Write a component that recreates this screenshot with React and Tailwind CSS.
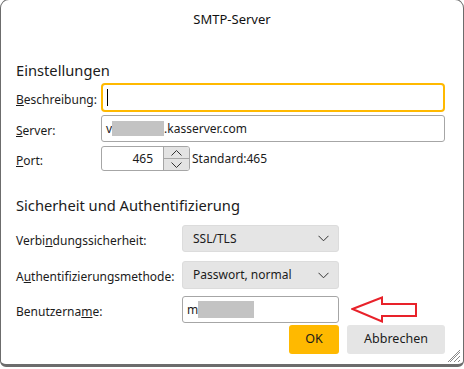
import React from "react"

const font = { fontFamily: '"Noto Sans", "Open Sans", sans-serif' }

function Chevron() {
  return (
    <svg width="11" height="7" viewBox="0 0 11 7" className="shrink-0">
      <path d="M0.5 0.8 L5.5 5.8 L10.5 0.8" fill="none" stroke="#333" strokeWidth="1" />
    </svg>
  )
}

function Label({ children }) {
  return <span className="text-[12px] text-[#1b1b1b] leading-[16px]">{children}</span>
}

function Select({ value }) {
  return (
    <div className="w-[157px] h-full flex items-center justify-between pl-[10px] pr-[9px] bg-[#e5e5e5] border border-[#dcdcdc] rounded-[3px] text-[12px] text-[#1b1b1b]">
      <span>{value}</span>
      <Chevron />
    </div>
  )
}

function Spinner() {
  return (
    <div className="w-[89px] h-full flex border border-[#a6a6a6] rounded-[3px] overflow-hidden bg-white">
      <div className="flex-1 flex items-center justify-end pr-[10px] text-[12px] text-[#1b1b1b]">465</div>
      <div className="w-[26px] flex flex-col border-l border-[#a6a6a6] bg-[#e3e3e3]">
        <div className="flex-1 flex items-center justify-center border-b border-[#a6a6a6]">
          <svg width="11" height="6" viewBox="0 0 11 6"><path d="M0.5 5.5 L5.5 0.5 L10.5 5.5" fill="none" stroke="#333" strokeWidth="1" /></svg>
        </div>
        <div className="flex-1 flex items-center justify-center">
          <svg width="11" height="6" viewBox="0 0 11 6"><path d="M0.5 0.5 L5.5 5.5 L10.5 0.5" fill="none" stroke="#333" strokeWidth="1" /></svg>
        </div>
      </div>
    </div>
  )
}

function Arrow() {
  return (
    <svg width="68" height="27" viewBox="0 0 68 27" className="shrink-0">
      <polygon points="1.5,13 31,1.5 31,8 65,8 65,20 31,20 31,25.5" fill="none" stroke="#e8222a" strokeWidth="2" strokeLinejoin="miter" />
    </svg>
  )
}

export default function App() {
  return (
    <div className="w-[464px] h-[369px] bg-white overflow-hidden" style={font}>
      <div className="relative -mt-px w-[464px] h-[368px] bg-white border border-b-[3px] border-[#6c6c6c] rounded-t-[9px] rounded-b-[6px] flex flex-col">
        {/* Title */}
        <div className="h-[40px] flex items-center justify-center text-[13px] text-[#111]">SMTP-Server</div>

        <div className="flex flex-col pl-[15px] pr-[18px]">
          {/* Einstellungen */}
          <div className="mt-[20px] h-[20px] flex items-center text-[14.7px] text-[#1b1b1b]">Einstellungen</div>

          <div className="mt-[3px] h-[29px] flex items-center">
            <div className="w-[85px]"><Label><u>B</u>eschreibung:</Label></div>
            <div className="flex-1 h-full flex items-center border-2 border-[#ffb900] rounded-[4px] pl-[4px]">
              <div className="w-px h-[17px] bg-black" />
            </div>
          </div>

          <div className="mt-[3px] h-[27px] flex items-center">
            <div className="w-[85px]"><Label><u>S</u>erver:</Label></div>
            <div className="flex-1 h-full flex items-center border border-[#a6a6a6] rounded-[3px] pl-[4px] text-[12px] text-[#1b1b1b]">
              <span>v</span>
              <span className="w-[52px] h-[15px] bg-[#c3c3c3]" />
              <span>.kasserver.com</span>
            </div>
          </div>

          <div className="mt-[4px] h-[25px] flex items-center">
            <div className="w-[85px]"><Label><u>P</u>ort:</Label></div>
            <Spinner />
            <span className="ml-[2px] text-[12px] text-[#1b1b1b]">Standard:465</span>
          </div>

          {/* Sicherheit */}
          <div className="mt-[24px] h-[20px] flex items-center text-[14.7px] text-[#1b1b1b]">Sicherheit und Authentifizierung</div>

          <div className="mt-[10px] h-[27px] flex items-center">
            <div className="w-[166px]"><Label>Verbi<u>n</u>dungssicherheit:</Label></div>
            <Select value="SSL/TLS" />
          </div>

          <div className="mt-[9px] h-[28px] flex items-center">
            <div className="w-[166px]"><Label>A<u>u</u>thentifizierungsmethode:</Label></div>
            <Select value="Passwort, normal" />
          </div>

          <div className="mt-[7px] h-[27px] flex items-center">
            <div className="w-[166px]"><Label>Benutzerna<u>m</u>e:</Label></div>
            <div className="w-[157px] h-full flex items-center border border-[#a6a6a6] rounded-[3px] pl-[4px] text-[12px] text-[#1b1b1b]">
              <span>m</span>
              <span className="w-[56px] h-[17px] bg-[#c3c3c3]" />
            </div>
            <div className="ml-[12px]"><Arrow /></div>
          </div>

          {/* Buttons */}
          <div className="mt-[2px] h-[29px] flex justify-end gap-[8px]">
            <button className="w-[50px] h-full bg-[#ffb900] rounded-[3px] text-[12.5px] text-[#1b1b1b]">OK</button>
            <button className="w-[98px] h-full bg-[#e5e5e5] rounded-[3px] text-[12.5px] text-[#1b1b1b]">Abbrechen</button>
          </div>
        </div>

        {/* resize grip */}
        <svg width="14" height="14" viewBox="0 0 14 14" className="absolute right-[2px] bottom-[1px]">
          <path d="M13 3 L3 13 M13 7 L7 13 M13 11 L11 13 M13 1 L1 13" stroke="#8a8a8a" strokeWidth="1" />
        </svg>
      </div>
    </div>
  )
}
